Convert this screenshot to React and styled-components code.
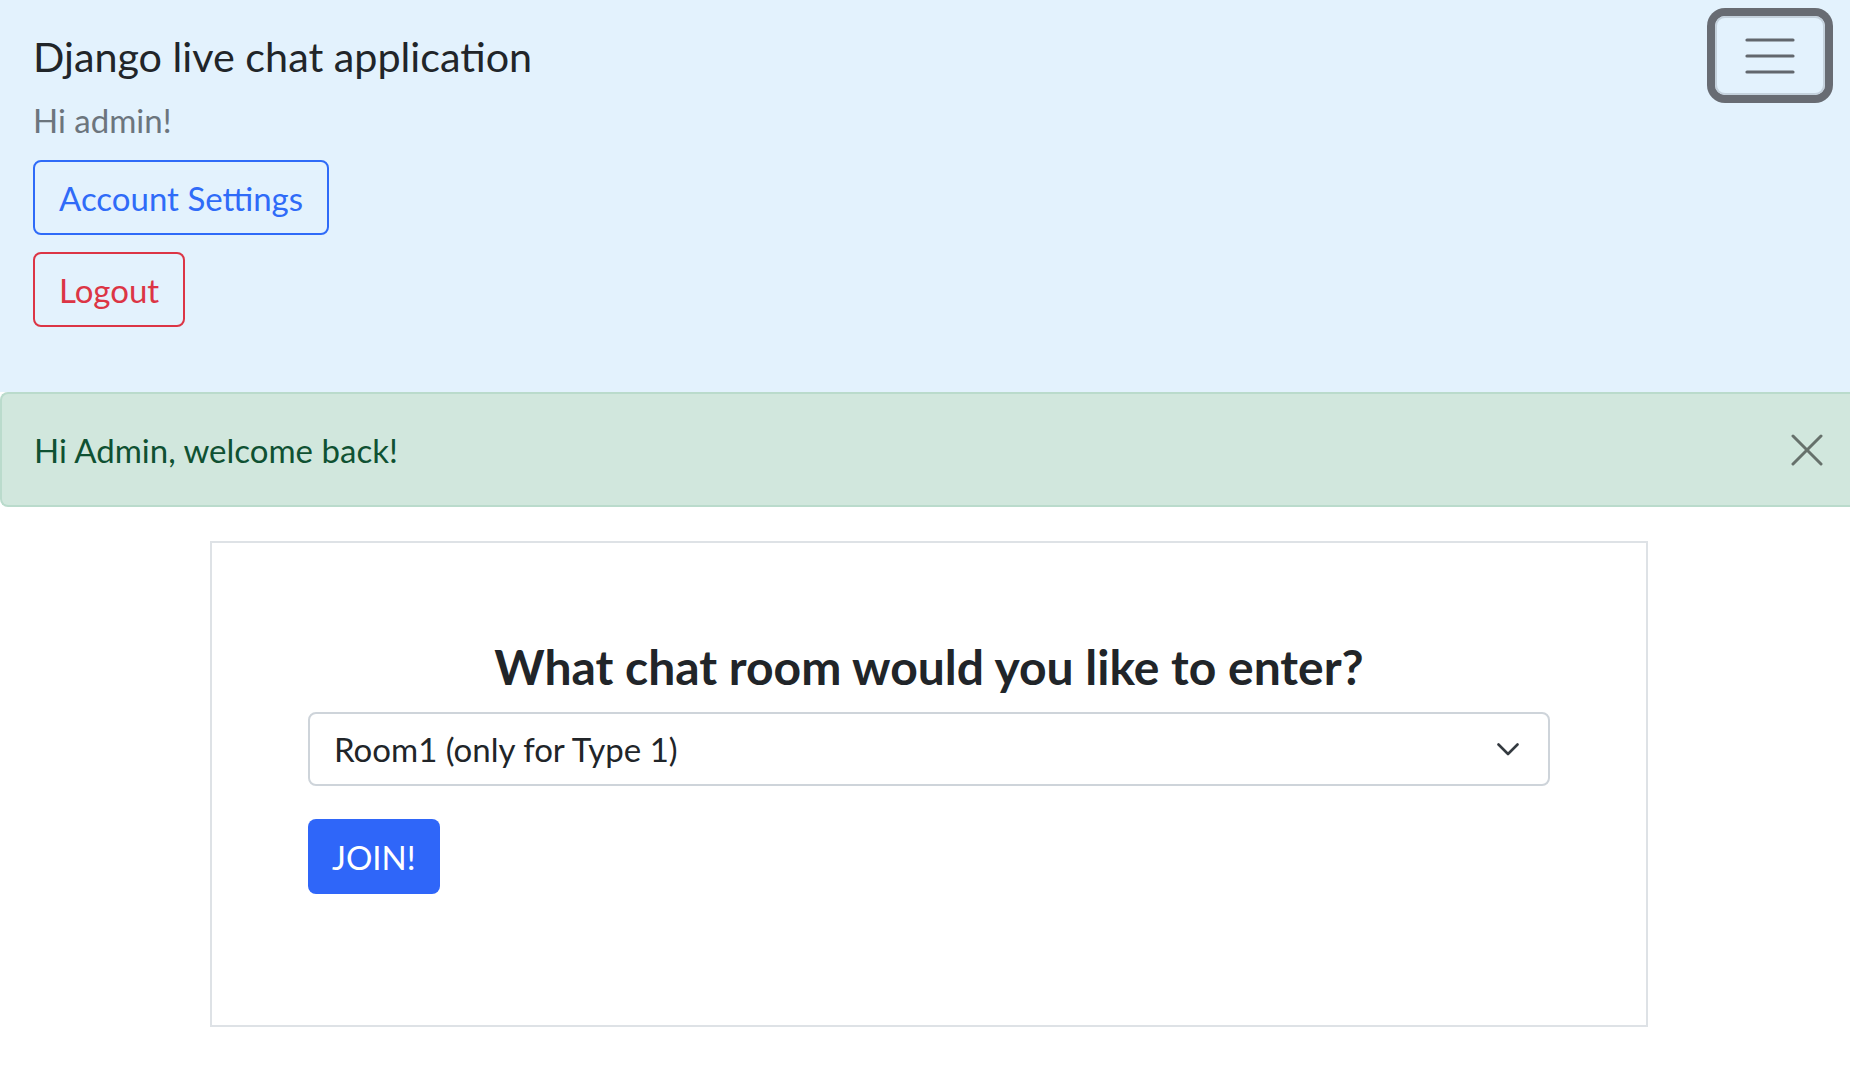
import styled, { createGlobalStyle } from "styled-components";

const GlobalStyle = createGlobalStyle`
  html, body {
    margin: 0;
    padding: 0;
    background: #fff;
    overflow-x: hidden;
  }

  body {
    font-family: Lato, "Open Sans", sans-serif;
    color: #212529;
  }
`;

const Header = styled.nav`
  display: flex;
  justify-content: space-between;
  align-items: flex-start;
  background-color: #e3f2fd;
  padding: 16px 25px 65px 33px;
`;

const UserColumn = styled.div`
  display: flex;
  flex-direction: column;
  align-items: flex-start;
`;

const Brand = styled.div`
  font-size: 41.3px;
  line-height: 60px;
  padding: 10px 0;
  color: #212529;
`;

const Greeting = styled.span`
  font-size: 33px;
  line-height: 48px;
  color: #6c757d;
`;

const OutlineButton = styled.button`
  margin-top: ${(p) => p.$gap}px;
  font-family: inherit;
  font-size: 33px;
  line-height: 48px;
  padding: 11.5px 24px;
  background: transparent;
  color: ${(p) => p.$color};
  border: 2px solid ${(p) => p.$color};
  border-radius: 8px;
  cursor: pointer;
`;

const Toggler = styled.button`
  width: 110px;
  height: 79px;
  display: flex;
  align-items: center;
  justify-content: center;
  background: transparent;
  border: 2px solid #c5d2dd;
  border-radius: 10px;
  box-shadow: 0 0 0 8px #686c73;
  padding: 0;
`;

const Alert = styled.div`
  display: flex;
  align-items: center;
  justify-content: space-between;
  background-color: #d1e7dd;
  border: 2px solid #badbcc;
  border-right: none;
  border-radius: 8px 0 0 8px;
  color: #0f5132;
  font-size: 33px;
  line-height: 48px;
  padding: 31.5px 27px 31.5px 32px;
`;

const CloseButton = styled.button`
  display: flex;
  background: transparent;
  border: none;
  padding: 0;
  cursor: pointer;
`;

const Card = styled.section`
  width: 1438px;
  box-sizing: border-box;
  margin: 34px 0 0 210px;
  border: 2px solid #dee2e6;
  padding: 95px 96px 131px;
`;

const Question = styled.h4`
  margin: 0 0 16px;
  text-align: center;
  font-size: 48px;
  line-height: 58px;
  font-weight: 700;
  color: #212529;
`;

const Form = styled.form`
  display: flex;
  flex-direction: column;
  align-items: flex-start;
`;

const SelectBox = styled.div`
  width: 100%;
  height: 74px;
  box-sizing: border-box;
  display: flex;
  align-items: center;
  justify-content: space-between;
  border: 2px solid #ced4da;
  border-radius: 8px;
  padding: 0 29px 0 24px;
  font-size: 33px;
  color: #212529;
`;

const JoinButton = styled.button`
  margin-top: 33px;
  height: 75px;
  padding: 0 24px;
  font-family: inherit;
  font-size: 33px;
  color: #fff;
  background-color: #2f66f9;
  border: none;
  border-radius: 8px;
  cursor: pointer;
`;

const App = () => {
  return (
    <>
      <GlobalStyle />
      <Header>
        <UserColumn>
          <Brand>Django live chat application</Brand>
          <Greeting>Hi admin!</Greeting>
          <OutlineButton $color="#2f6bf8" $gap={16}>Account Settings</OutlineButton>
          <OutlineButton $color="#dc3545" $gap={17}>Logout</OutlineButton>
        </UserColumn>
        <Toggler aria-label="Toggle navigation">
          <svg width="50" height="40" viewBox="0 0 50 40">
            <g stroke="#62676d" strokeWidth="3.2" strokeLinecap="round">
              <line x1="2" y1="4" x2="48" y2="4" />
              <line x1="2" y1="20" x2="48" y2="20" />
              <line x1="2" y1="36" x2="48" y2="36" />
            </g>
          </svg>
        </Toggler>
      </Header>

      <Alert>
        <span>Hi Admin, welcome back!</span>
        <CloseButton aria-label="Close">
          <svg width="32" height="32" viewBox="0 0 32 32">
            <g stroke="#66716b" strokeWidth="3" strokeLinecap="round">
              <line x1="2" y1="2" x2="30" y2="30" />
              <line x1="30" y1="2" x2="2" y2="30" />
            </g>
          </svg>
        </CloseButton>
      </Alert>

      <Card>
        <Question>What chat room would you like to enter?</Question>
        <Form>
          <SelectBox>
            <span>Room1 (only for Type 1)</span>
            <svg width="22" height="13" viewBox="0 0 22 13">
              <path d="M1.5 1.5 11 11 20.5 1.5" fill="none" stroke="#343a40" strokeWidth="2.6" strokeLinecap="round" strokeLinejoin="round" />
            </svg>
          </SelectBox>
          <JoinButton type="button">JOIN!</JoinButton>
        </Form>
      </Card>
    </>
  );
};

export default App;
